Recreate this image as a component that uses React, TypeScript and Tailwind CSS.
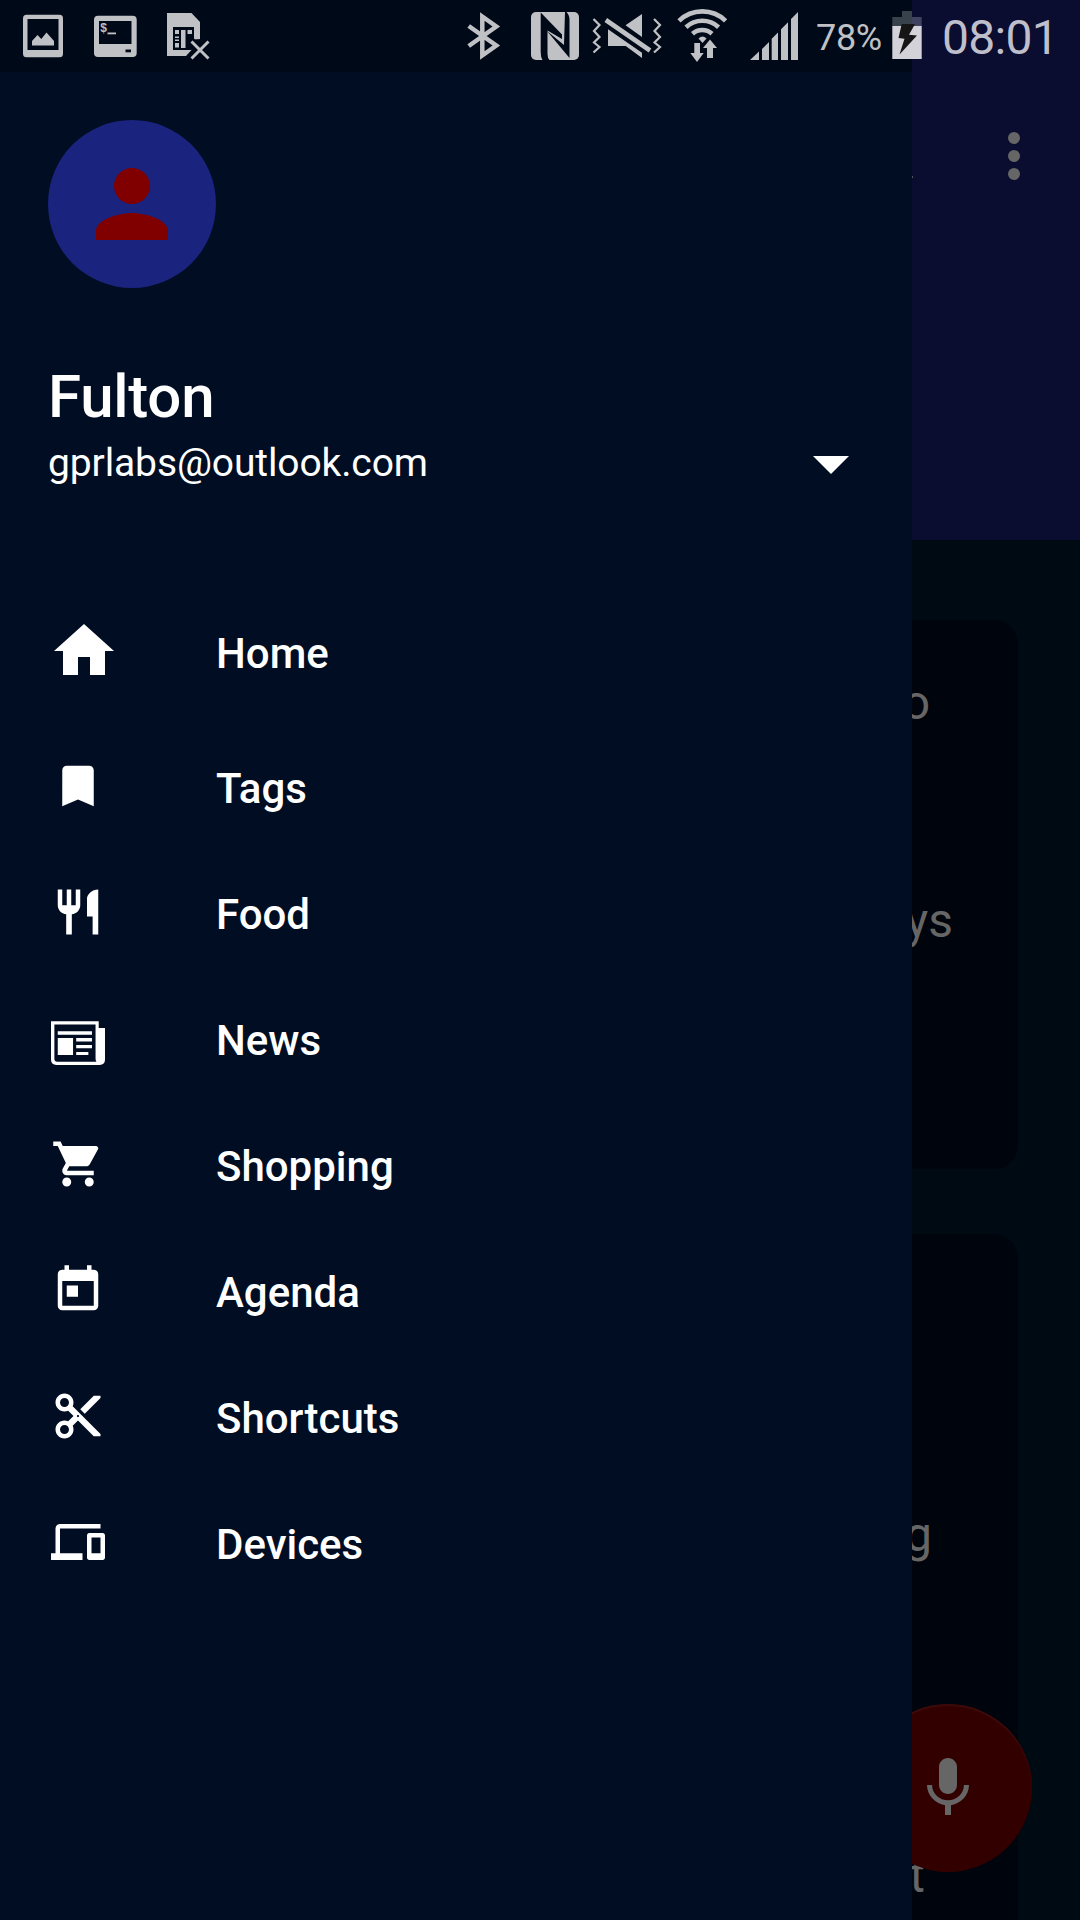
import type { ReactNode } from "react";

type MenuItem = { label: string; icon: ReactNode; large?: boolean };

const menu: MenuItem[] = [
  { label: "Home", large: true, icon: <path d="M10 20v-6h4v6h5v-8h3L12 3 2 12h3v8z" /> },
  { label: "Tags", icon: <path d="M17 3H7c-1.1 0-1.990.9-1.990 2L5 21l7-3 7 3V5c0-1.100-.9-2-2-2z" /> },
  {
    label: "Food",
    icon: (
      <path d="M11 9H9V2H7v7H5V2H3v7c0 2.120 1.660 3.840 3.750 3.970V22h2.500v-9.030C11.340 12.840 13 11.120 13 9V2h-2v7zm5-3v8h2.500v8H21V2c-2.760 0-5 2.240-5 4z" />
    ),
  },
  {
    label: "News",
    icon: (
      <>
        <path
          fillRule="evenodd"
          d="M0 4.600H21.200V7.500H24V21.600Q24 24 21.600 24H2.400Q0 24 0 21.600ZM1.500 6V21.200Q1.500 22.500 2.800 22.500H20.200Q19.800 22 19.800 21.200V6Z"
        />
        <path d="M3 9h15.200v1.500H3zM3 12h6.800v7.600H3zM11.200 12h7v1.500h-7zM11.200 15.100h7v1.500h-7zM11.200 18.200h5.400v1.400h-5.400z" />
      </>
    ),
  },
  {
    label: "Shopping",
    icon: (
      <path d="M7 18c-1.100 0-1.990.9-1.990 2S5.900 22 7 22s2-.9 2-2-.9-2-2-2zM1 2v2h2l3.600 7.590-1.350 2.450c-.16.280-.25.610-.25.960 0 1.100.9 2 2 2h12v-2H7.420c-.14 0-.25-.11-.25-.25l.03-.12.9-1.630h7.450c.75 0 1.410-.41 1.750-1.030l3.580-6.490c.08-.14.12-.31.12-.48 0-.55-.45-1-1-1H5.210l-.94-2H1zm16 16c-1.100 0-1.990.9-1.990 2s.89 2 1.990 2 2-.9 2-2-.9-2-2-2z" />
    ),
  },
  {
    label: "Agenda",
    icon: (
      <path d="M19 3h-1V1h-2v2H8V1H6v2H5c-1.110 0-1.990.9-1.990 2L3 19c0 1.100.89 2 2 2h14c1.100 0 2-.9 2-2V5c0-1.100-.9-2-2-2zm0 16H5V8h14v11zM7 10h5v5H7z" />
    ),
  },
  {
    label: "Shortcuts",
    icon: (
      <path d="M9.640 7.640c.23-.5.360-1.050.360-1.640 0-2.210-1.790-4-4-4S2 3.790 2 6s1.790 4 4 4c.59 0 1.140-.13 1.640-.36L10 12l-2.360 2.360C7.140 14.130 6.590 14 6 14c-2.210 0-4 1.790-4 4s1.790 4 4 4 4-1.790 4-4c0-.59-.13-1.140-.36-1.640L12 14l7 7h3v-1L9.640 7.640zM6 8c-1.100 0-2-.89-2-2s.9-2 2-2 2 .89 2 2-.9 2-2 2zm0 12c-1.100 0-2-.89-2-2s.9-2 2-2 2 .89 2 2-.9 2-2 2zm6-7.500c-.28 0-.5-.22-.5-.5s.22-.5.5-.5.5.22.5.5-.22.5-.5.5zM19 3l-6 6 2 2 7-7V3z" />
    ),
  },
  {
    label: "Devices",
    icon: (
      <path d="M4 6h18V4H4c-1.100 0-2 .9-2 2v11H0v3h14v-3H4V6zm19 2h-6c-.55 0-1 .45-1 1v10c0 .55.45 1 1 1h6c.55 0 1-.45 1-1V9c0-.55-.45-1-1-1zm-1 9h-4v-7h4v7z" />
    ),
  },
];

/* Status glyphs share one coordinate system: the bar itself, 72 high. */
function Glyph({ x, w, children }: { x: number; w: number; children: ReactNode }) {
  return (
    <svg className="shrink-0" width={w} height={72} viewBox={`${x} 0 ${w} 72`} fill="#bfc1c5">
      {children}
    </svg>
  );
}

const DARK = "#000918";

function StatusBar() {
  return (
    <div className="absolute inset-x-0 top-0 z-20 flex h-[72px] items-start">
      <div className="flex w-[912px] shrink-0 bg-[#000918] pl-[23px]">
        <Glyph x={23} w={40}>
          <rect x="23" y="14.700" width="40" height="42.500" rx="3.500" />
          <rect x="27.500" y="19" width="31" height="31" fill={DARK} />
          <path d="M32 45.500V41l5.500-6 3.800 4 5.200-6.500 7.500 8.500v4.500z" />
        </Glyph>
        <div className="w-[30px]" />
        <Glyph x={93} w={44}>
          <rect x="94" y="15.700" width="42.700" height="41.300" rx="4" />
          <rect x="99" y="21" width="32.500" height="23" fill={DARK} />
          <text x="100" y="32" fontSize="12" fontWeight="700" fontFamily="Liberation Mono, monospace">
            $
          </text>
          <rect x="107.500" y="32.500" width="8.500" height="1.800" />
          <rect x="125.500" y="49.500" width="5.500" height="2.800" fill={DARK} />
        </Glyph>
        <div className="w-[29px]" />
        <Glyph x={166} w={44}>
          <path d="M167 13h24.500l8.500 9v34h-33z" />
          <rect x="173" y="27" width="21" height="23" fill={DARK} />
          <path d="M175 30h4v4h-4zM175 36.500h4v1.500h-4zM175 39.500h4v1.500h-4zM175 43h4v4.500h-4zM181 30h4.500v18h-4.500zM187.500 30h4.500v4h-4.500z" />
          <path d="M201 39v17.500h-16l8-8-3-6 3-3z" fill={DARK} />
          <path d="M191 40.500l17.500 18M208.500 40.500l-17.500 18" stroke={DARK} strokeWidth="7" />
          <path d="M186 56l-2 0 8-7z" />
          <path d="M191.500 41.500l17 17M208.500 41.500l-17 17" stroke="#bfc1c5" strokeWidth="3" />
        </Glyph>
        <div className="w-[256px]" />
        <Glyph x={466} w={35}>
          <path
            d="M468.700 26L496.300 45.500 482.300 55.500V16.500L496.300 26.500 468.700 46"
            fill="none"
            stroke="#bfc1c5"
            strokeWidth="4.500"
          />
        </Glyph>
        <div className="w-[29px]" />
        <Glyph x={530} w={50}>
          <rect x="531" y="12" width="48" height="48" rx="5" />
          <path d="M540.700 12.500L562 34.500V39L547.500 30.500V54q0 4 2 6h-7q-1.800-3-1.800-8zM565 12h1.500q3 3 3 8v38L547 31l17 14z" fill={DARK} />
        </Glyph>
        <div className="w-[12px]" />
        <Glyph x={592} w={70}>
          <path
            d="M593.500 19l6 6-5.500 6 5.500 6-5.500 5.500 5.500 4.500-6 5.500M654 19l6 6-5.500 6 5.500 6-5.500 5.500 5.500 4.500-6 5.500"
            fill="none"
            stroke="#bfc1c5"
            strokeWidth="2.200"
          />
          <path d="M605.800 20L650 50.500" stroke="#bfc1c5" strokeWidth="4.600" />
          <path d="M642 14v23l-16.500-11.700zM608 29.300V46h17.700L642 58v-5.300z" />
        </Glyph>
        <div className="w-[14px]" />
        <Glyph x={676} w={52}>
          <g fill="none" stroke="#bfc1c5" strokeWidth="4.600">
            <path d="M679 20.800A33.400 33.400 0 0 1 725.600 20.800" />
            <path d="M686 27.200A24 24 0 0 1 718.600 27.200" />
            <path d="M692.500 33.800A14.500 14.500 0 0 1 712 33.800" />
          </g>
          <path d="M698.500 38.500q4-4 8 0l-4 4.500z" />
          <path
            d="M703 48l7-8.500 7 8.500h-4v10h-6V48zM694.300 43h5.700v10h3.700l-6.700 9-6.700-9h4z"
            stroke={DARK}
            strokeWidth="2"
            paintOrder="stroke"
          />
        </Glyph>
        <div className="w-[22px]" />
        <Glyph x={750} w={49}>
          <path d="M750 60h9v-8.500zM762 60V49l7-7v18zM771.700 60V38.800l6.300-6.300V60zM781 60V29.300l7-7V60zM791 60V19l7-7v48z" />
        </Glyph>
        <span className="-mr-8 w-[93px] shrink-0 pl-[17px] pt-[14px] text-[36px] leading-[48px] tracking-[-0.3px] text-[#bfc1c5]">78%</span>
      </div>
      <div className="relative -ml-5 flex">
        <Glyph x={892} w={30}>
          <path d="M902 11h10v6h-10z" fill="#38424d" />
          <path d="M892.300 17H912v9.500h-19.700z" fill="#38424d" />
          <path d="M912 17h9.700v9.500H912z" fill="#41425f" />
          <path d="M892.300 26h29.400v33h-29.400z" fill="#d2d2d8" />
          <path d="M901.700 24H915l-6 10.700 8 .8-17.500 19 5-15.800-6-.7z" fill="#151515" />
        </Glyph>
        <span className="ml-[20px] pt-[10px] text-[48px] leading-[56px] font-normal tracking-[-0.7px] text-[#bfbfcb]">08:01</span>
      </div>
    </div>
  );
}

function Drawer() {
  return (
    <aside className="absolute inset-y-0 left-0 z-10 w-[912px] bg-[#000d22]">
      <header className="flex h-[553px] flex-col pl-12 pt-[120px]">
        <div className="flex size-[168px] items-center justify-center rounded-full bg-[#1a237e]">
          <svg width="108" height="108" viewBox="0 0 24 24" fill="#800000">
            <path d="M12 12c2.210 0 4-1.790 4-4s-1.790-4-4-4-4 1.790-4 4 1.790 4 4 4zm0 2c-2.670 0-8 1.340-8 4v2h16v-2c0-2.660-5.330-4-8-4z" />
          </svg>
        </div>
        <h1 className="mt-[74px] text-[60px] leading-[70px] font-medium tracking-[-0.25px]">Fulton</h1>
        <div className="-mt-px flex items-center justify-between pr-[63px]">
          <span className="pt-[7px] text-[39px] leading-[50px] tracking-[-0.12px]">gprlabs@outlook.com</span>
          <svg className="mt-[10px]" width="36" height="18" viewBox="0 0 36 18" fill="white">
            <path d="M0 0h36L18 18z" />
          </svg>
        </div>
      </header>
      <nav className="pt-[35px]">
        {menu.map((m) => (
          <div key={m.label} className={m.large ? "flex h-[135px] items-start" : "flex h-[126px] items-start"}>
            <div className={m.large ? "w-[216px] pl-12 pt-[27px]" : "w-[216px] pl-[51px] pt-9"}>
              <svg width={m.large ? 72 : 54} height={m.large ? 72 : 54} viewBox="0 0 24 24" fill="white">
                {m.icon}
              </svg>
            </div>
            <span className="pt-[39px] text-[42px] leading-[54px] font-medium">{m.label}</span>
          </div>
        ))}
      </nav>
    </aside>
  );
}

function Page() {
  return (
    <div className="flex h-[1920px] flex-col text-[48px] leading-[56px] text-[#666666]">
      <div className="flex h-[540px] shrink-0 items-start justify-end bg-[#0a0c30] pt-[132px] pr-[60px]">
        <div className="mt-[44px] mr-[95px] h-[2px] w-px bg-[#555566]" />
        <div className="flex flex-col gap-[6px]">
          <i className="size-3 rounded-full bg-[#666666]" />
          <i className="size-3 rounded-full bg-[#666666]" />
          <i className="size-3 rounded-full bg-[#666666]" />
        </div>
      </div>
      <div className="flex min-h-0 grow flex-col gap-[65px] overflow-hidden pt-20 pr-[62px]">
        <section className="flex h-[549px] shrink-0 flex-col items-end rounded-r-[24px] bg-[#00040c]">
          <span className="mt-[55px] mr-[88px]">o</span>
          <span className="mt-[162px] mr-[65px]">ys</span>
        </section>
        <section className="flex h-[800px] shrink-0 flex-col items-end rounded-tr-[24px] bg-[#00040c]">
          <span className="mt-[273px] mr-[86px]">g</span>
          <span className="mt-[285px] mr-[93px]">t</span>
        </section>
      </div>
    </div>
  );
}

export default function App() {
  return (
    <div className="relative h-[1920px] w-[1080px] overflow-hidden bg-[#000a13] font-['Roboto',sans-serif] text-white">
      <Page />
      <button className="absolute top-[1704px] left-[864px] flex size-[168px] items-center justify-center rounded-full bg-[#330000] shadow-[inset_0_2px_1px_#3d0b0b]">
        <svg width="72" height="72" viewBox="0 0 24 24" fill="#666666">
          <path d="M12 14c1.660 0 2.990-1.340 2.990-3L15 5c0-1.660-1.340-3-3-3S9 3.340 9 5v6c0 1.660 1.340 3 3 3zm5.300-3c0 3-2.540 5.100-5.300 5.100S6.700 14 6.700 11H5c0 3.410 2.720 6.230 6 6.720V21h2v-3.280c3.280-.48 6-3.300 6-6.720h-1.700z" />
        </svg>
      </button>
      <Drawer />
      <StatusBar />
    </div>
  );
}
